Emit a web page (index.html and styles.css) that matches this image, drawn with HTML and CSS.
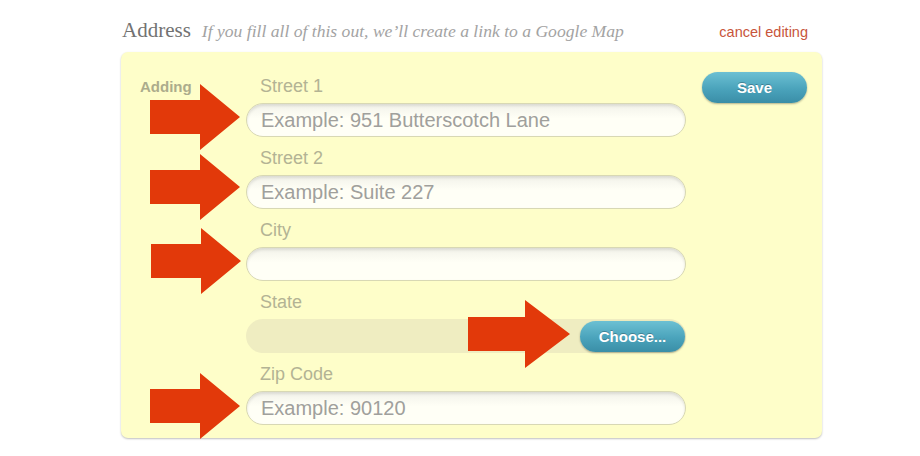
FILE: index.html
```html
<!DOCTYPE html>
<html>
<head>
  <meta charset="UTF-8" />
  <title>Address</title>
  <link rel="stylesheet" href="styles.css">
</head>
<body>

  <div class="wrap">
    <!-- Section header -->
    <div class="header">
      <span class="title">Address</span>
      <span class="hint">If you fill all of this out, we’ll create a link to a Google Map</span>
      <a class="cancel" href="#">cancel editing</a>
    </div>

    <!-- Editing panel -->
    <div class="panel">
      <div class="mode">Adding</div>

      <div class="fields">
        <div class="field">
          <label>Street 1</label>
          <input type="text" placeholder="Example: 951 Butterscotch Lane" />
        </div>
        <div class="field">
          <label>Street 2</label>
          <input type="text" placeholder="Example: Suite 227" />
        </div>
        <div class="field">
          <label>City</label>
          <input type="text" />
        </div>
        <div class="field">
          <label>State</label>
          <div class="select">
            <button class="btn">Choose...</button>
          </div>
        </div>
        <div class="field">
          <label>Zip Code</label>
          <input type="text" placeholder="Example: 90120" />
        </div>
      </div>

      <div class="actions">
        <button class="btn save">Save</button>
      </div>
    </div>

    <!-- Annotation arrows -->
    <svg class="arrow a1" viewBox="0 0 90 66"><polygon points="0,16 50,16 50,0 90,33 50,66 50,50 0,50" /></svg>
    <svg class="arrow a2" viewBox="0 0 90 66"><polygon points="0,16 50,16 50,0 90,33 50,66 50,50 0,50" /></svg>
    <svg class="arrow a3" viewBox="0 0 90 66"><polygon points="0,16 50,16 50,0 90,33 50,66 50,50 0,50" /></svg>
    <svg class="arrow a4" viewBox="0 0 102 68"><polygon points="0,17 57,17 57,0 102,34 57,68 57,51 0,51" /></svg>
    <svg class="arrow a5" viewBox="0 0 90 66"><polygon points="0,16 50,16 50,0 90,33 50,66 50,50 0,50" /></svg>
  </div>

</body>
</html>
```

FILE: styles.css
```css
body {
  margin: 0;
  padding: 0;
  background: #ffffff;
  font-family: "Liberation Sans", Arial, sans-serif;
}
.wrap {
  position: relative;
  width: 920px;
  height: 456px;
}

/* header line */
.header {
  box-sizing: border-box;
  display: flex;
  align-items: baseline;
  width: 822px;
  height: 52px;
  padding: 18px 14px 0 122px;
}
.title {
  font-family: "Liberation Serif", Georgia, serif;
  font-size: 21px;
  line-height: 24px;
  color: #727272;
}
.hint {
  margin-left: 11px;
  font-family: "Liberation Serif", Georgia, serif;
  font-style: italic;
  font-size: 17.6px;
  color: #a3a3a3;
}
.cancel {
  margin-left: auto;
  font-size: 14.5px;
  color: #c8553b;
  text-decoration: none;
}

/* yellow panel */
.panel {
  display: flex;
  margin-left: 121px;
  width: 701px;
  height: 386px;
  box-sizing: border-box;
  padding: 20px 15px 0 19px;
  background: #fefec9;
  border-radius: 7px;
  box-shadow: 0 1px 2px rgba(0,0,0,0.25);
}
.mode {
  width: 106px;
  margin-top: 6px;
  font-size: 15px;
  font-weight: bold;
  line-height: 18px;
  color: #acac8c;
}
.fields {
  width: 440px;
  margin-top: 3px;
}
.field {
  margin-bottom: 10px;
}
.field label {
  display: block;
  padding-left: 14px;
  margin-bottom: 6px;
  font-size: 18px;
  line-height: 22px;
  color: #b3b394;
}
.field input {
  display: block;
  box-sizing: border-box;
  width: 440px;
  height: 34px;
  padding: 0 14px;
  font-family: "Liberation Sans", Arial, sans-serif;
  font-size: 20px;
  color: #666;
  background: linear-gradient(#f2f2ea, #fffff6 45%);
  border: 1px solid #d8d8b4;
  border-radius: 17px;
  box-shadow: inset 0 2px 3px rgba(0,0,0,0.10);
  outline: none;
}
.field input::placeholder {
  color: #a0a09c;
}
.select {
  display: flex;
  justify-content: flex-end;
  align-items: center;
  height: 34px;
  padding-right: 1px;
  box-sizing: border-box;
  background: #efedc1;
  border-radius: 17px;
}

/* blue pill buttons */
.btn {
  width: 105px;
  height: 31px;
  font-family: "Liberation Sans", Arial, sans-serif;
  font-size: 15px;
  font-weight: bold;
  color: #fff;
  text-shadow: 0 -1px 0 rgba(0,0,0,0.25);
  background: linear-gradient(#6cc0d3, #4aa3bb 55%, #3a8ea7);
  border: none;
  border-radius: 16px;
  box-shadow: 0 1px 2px rgba(0,0,0,0.3);
  cursor: pointer;
}
.actions {
  margin-left: 16px;
}

/* annotation arrows */
.arrow {
  position: absolute;
  width: 90px;
  height: 66px;
  fill: #e2390a;
}
.a1 { left: 150px; top: 84px; }
.a2 { left: 150px; top: 154px; }
.a3 { left: 151px; top: 228px; }
.a4 { left: 468px; top: 300px; width: 102px; height: 68px; }
.a5 { left: 150px; top: 373px; }
```
